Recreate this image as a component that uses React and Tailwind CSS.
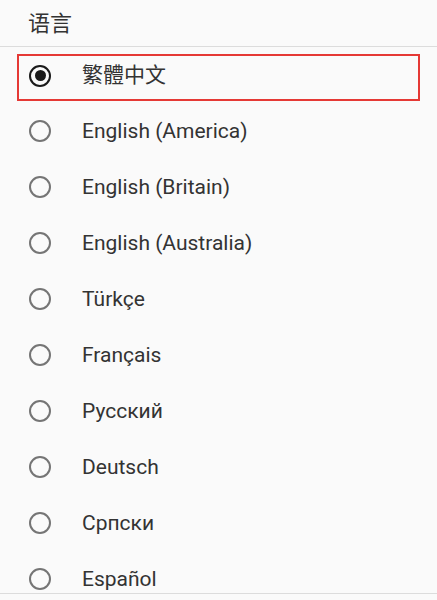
import React from "react";

const langs = [
  "繁體中文",
  "English (America)",
  "English (Britain)",
  "English (Australia)",
  "Türkçe",
  "Français",
  "Русский",
  "Deutsch",
  "Српски",
  "Español",
];

function Radio({ checked }) {
  return (
    <div
      className={
        "w-[22px] h-[22px] rounded-full border-2 flex items-center justify-center shrink-0 " +
        (checked ? "border-[#1a1a1a]" : "border-[#757575]")
      }
    >
      {checked && <div className="w-[11px] h-[11px] rounded-full bg-[#1a1a1a]" />}
    </div>
  );
}

function Row({ label, checked }) {
  return (
    <div className="flex items-center">
      <Radio checked={checked} />
      <span className="ml-[31px] text-[21px] text-[#333333] leading-none">{label}</span>
    </div>
  );
}

export default function App() {
  return (
    <div
      className="w-[437px] h-[600px] bg-[#fafafa] overflow-hidden flex flex-col"
      style={{ fontFamily: 'Roboto, "Noto Sans CJK SC", sans-serif' }}
    >
      <div className="h-[47px] shrink-0 flex items-center pl-[28px] text-[22px] text-[#333333] border-b border-[#dcdcdc]">
        语言
      </div>
      <div className="flex flex-col">
        {langs.map((l, i) =>
          i === 0 ? (
            <div key={l} className="h-[56px] shrink-0 pt-[7px] px-[17px]">
              <div className="h-[47px] border-2 border-[#e53935] flex items-center pl-[10px] pb-[4px]">
                <Row label={l} checked />
              </div>
            </div>
          ) : (
            <div key={l} className="h-[56px] shrink-0 flex items-center pl-[29px]">
              <Row label={l} checked={false} />
            </div>
          )
        )}
      </div>
      <div className="border-t border-[#dcdcdc] -mt-[14px]" />
    </div>
  );
}
